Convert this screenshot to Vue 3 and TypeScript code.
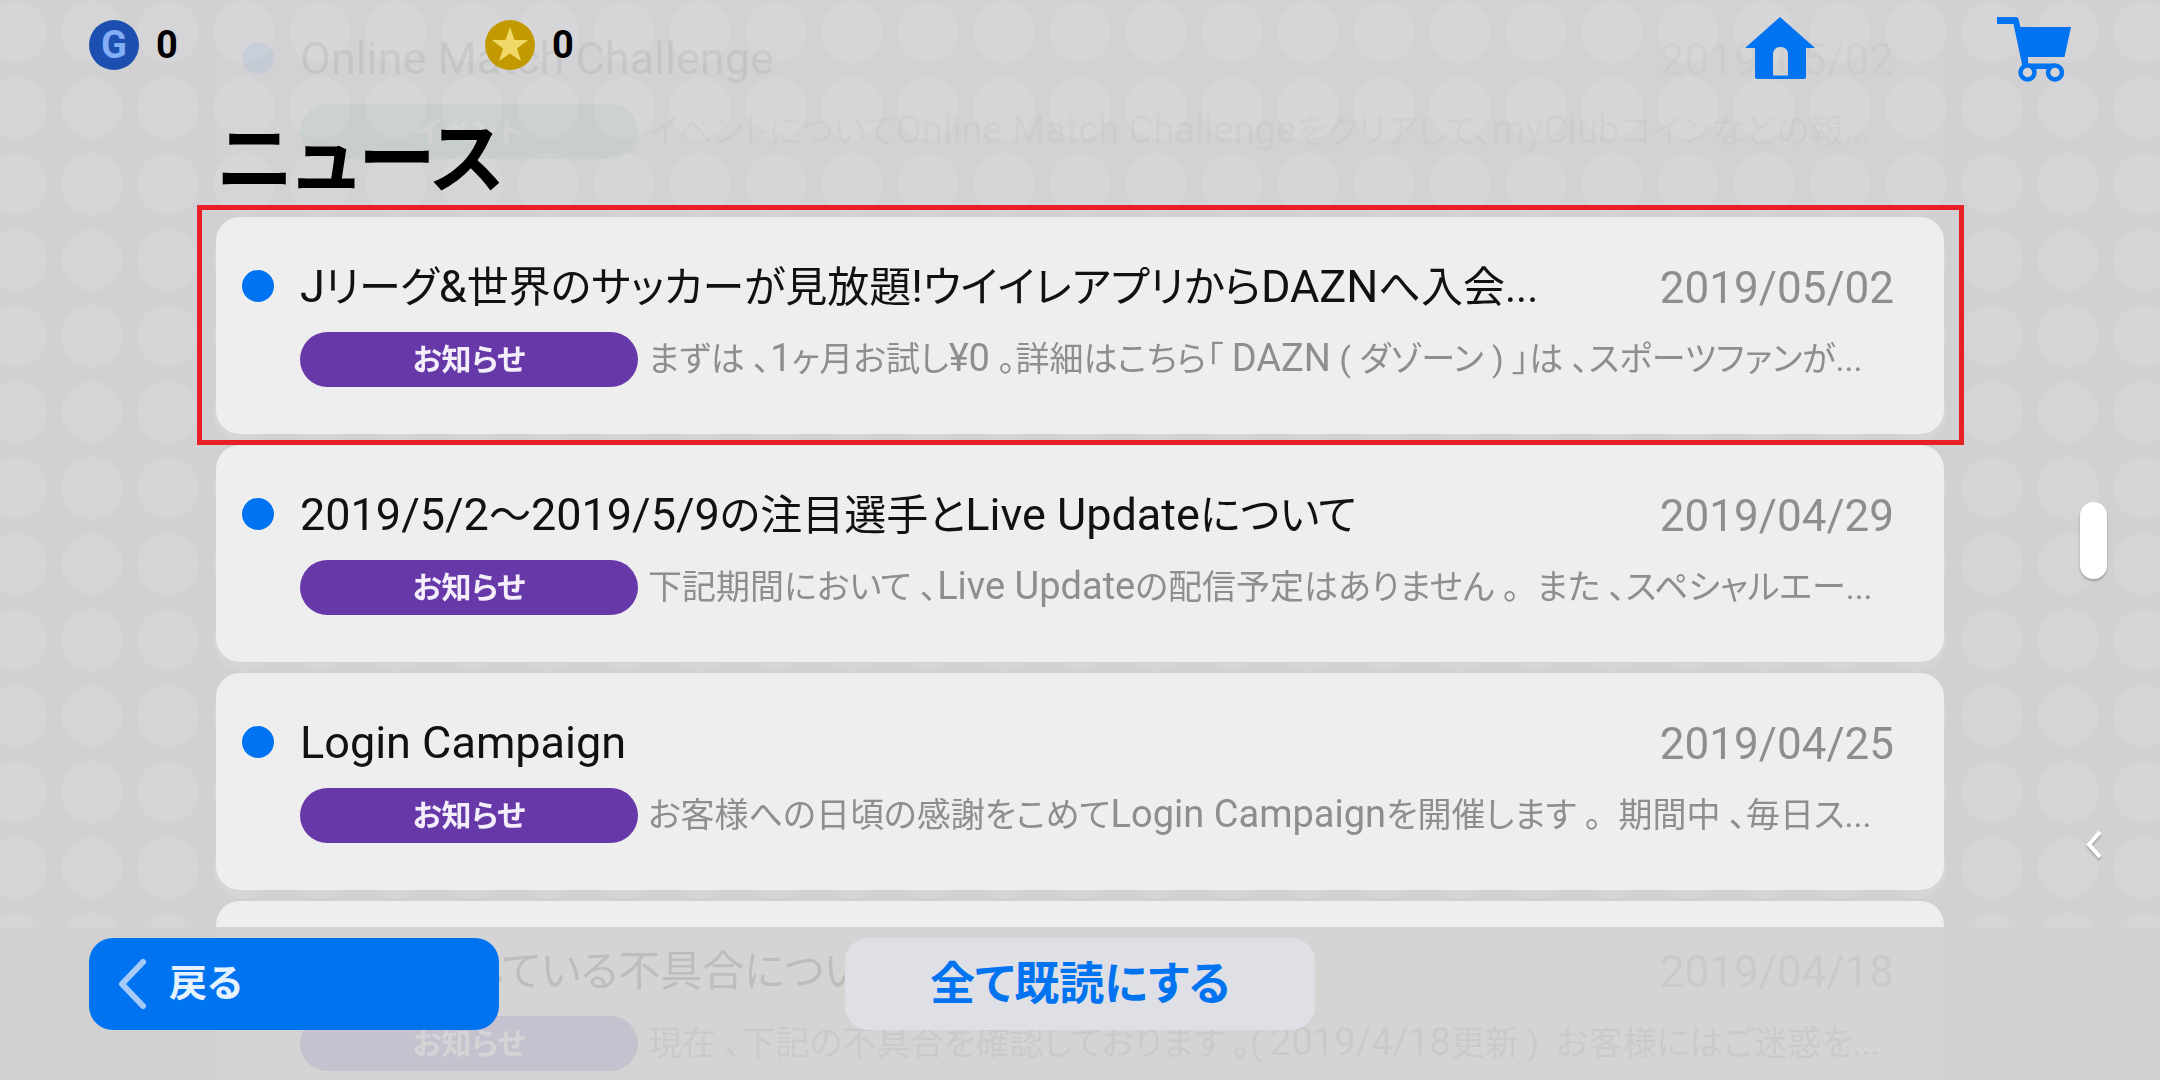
<script setup lang="ts">
interface NewsItem {
  title: string
  date: string
  kind: 'info' | 'event'
  body: string
  framed?: boolean
}

const kindLabels: Record<NewsItem['kind'], string> = {
  info: 'お知らせ',
  event: 'イベント',
}

const news: NewsItem[] = [
  {
    title: 'Online Match Challenge',
    date: '2019/05/02',
    kind: 'event',
    body: 'イベントについてOnline Match Challengeをクリアして、myClubコインなどの報...',
  },
  {
    title: 'Jリーグ&世界のサッカーが見放題!ウイイレアプリからDAZNへ入会...',
    date: '2019/05/02',
    kind: 'info',
    body: 'まずは 、1ヶ月お試し¥0 。詳細はこちら「 DAZN ( ダゾーン ) 」は 、スポーツファンが...',
    framed: true,
  },
  {
    title: '2019/5/2～2019/5/9の注目選手とLive Updateについて',
    date: '2019/04/29',
    kind: 'info',
    body: '下記期間において 、Live Updateの配信予定はありません 。\u00a0 また 、スペシャルエー...',
  },
  {
    title: 'Login Campaign',
    date: '2019/04/25',
    kind: 'info',
    body: 'お客様への日頃の感謝をこめてLogin Campaignを開催します 。\u00a0 期間中 、毎日ス...',
  },
  {
    title: '現在発生している不具合について',
    date: '2019/04/18',
    kind: 'info',
    body: '現在 、下記の不具合を確認しております 。( 2019/4/18更新 )\u00a0 お客様にはご迷惑を...',
  },
]

/* Latin words and numbers are set a little larger than the kana and kanji. */
const splitRuns = (text: string) =>
  text
    .split(/([A-Za-z0-9&/!¥]+(?: [A-Za-z]+)*)/)
    .filter(Boolean)
    .map((run) => ({ text: run, latin: /^[A-Za-z0-9&/!¥]/.test(run) }))
</script>

<template>
  <div class="screen">
    <ul class="news">
      <li v-for="item in news" :key="item.title" :class="{ framed: item.framed }">
        <a class="card" href="#">
          <span class="unread"></span>
          <span class="content">
            <span class="line">
              <span class="title"
                ><span v-for="(run, i) in splitRuns(item.title)" :key="i" :class="{ latin: run.latin }">{{
                  run.text
                }}</span></span
              >
              <time class="date">{{ item.date }}</time>
            </span>
            <span class="line">
              <span class="badge" :class="item.kind">{{ kindLabels[item.kind] }}</span>
              <span class="body"
                ><span v-for="(run, i) in splitRuns(item.body)" :key="i" :class="{ latin: run.latin }">{{
                  run.text
                }}</span></span
              >
            </span>
          </span>
        </a>
      </li>
    </ul>

    <header class="top">
      <div class="bar">
        <div class="coin">
          <span class="gp">G</span>
          <span>0</span>
        </div>
        <div class="coin">
          <svg width="50" height="50" viewBox="0 0 50 50" aria-hidden="true">
            <circle cx="25" cy="25" r="25" fill="#c29a00" />
            <path d="M25 7l4.500 13H43L32 28.500 36 41 25 33.500 14 41l4-12.500L7 20h13.500z" fill="#f0d968" />
          </svg>
          <span>0</span>
        </div>
        <nav class="actions">
          <button type="button" aria-label="ホーム">
            <svg width="70" height="62" viewBox="0 0 70 62">
              <path
                fill="#0073f0"
                fill-rule="evenodd"
                d="M35 0 70 31H61V60Q61 62 59 62H12Q10 62 10 60V31H0ZM28 58.500H43V38Q43 30 35.500 30T28 38Z"
              />
            </svg>
          </button>
          <button type="button" aria-label="ショップ">
            <svg width="74" height="66" viewBox="0 0 74 66">
              <path
                fill="#0073f0"
                d="M0 0H19Q21 0 21.500 2L23.500 10H74L67.500 40H31V46.500H58V52H26L16.500 7H0Z"
              />
              <g fill="#d4d4d6" stroke="#0073f0" stroke-width="4.500">
                <circle cx="30.500" cy="55.500" r="7" />
                <circle cx="58" cy="55.500" r="7" />
              </g>
            </svg>
          </button>
        </nav>
      </div>
      <h1>ニュース</h1>
    </header>

    <aside class="edge" aria-hidden="true">
      <span class="handle"></span>
      <svg width="18" height="30" viewBox="0 0 18 30">
        <path d="M15 2 4 14.500 15 27" fill="none" stroke="#fff" stroke-width="4" />
      </svg>
    </aside>

    <footer class="bottom">
      <button type="button" class="back">
        <svg width="30" height="52" viewBox="0 0 30 52" aria-hidden="true">
          <path
            d="M26 4 5 26 26 48"
            fill="none"
            stroke="#a6cbf8"
            stroke-width="6"
            stroke-linecap="round"
            stroke-linejoin="round"
          />
        </svg>
        <span>戻る</span>
      </button>
      <button type="button" class="read-all">全て既読にする</button>
    </footer>
  </div>
</template>

<style>
html,
body {
  margin: 0;
  overflow: hidden;
}
</style>

<style scoped>
.screen {
  position: relative;
  box-sizing: border-box;
  height: 100vh;
  overflow: hidden;
  font-family: Roboto, 'Noto Sans CJK JP', sans-serif;
  font-feature-settings: 'palt';
  background-color: #d1d1d3;
  background-image: radial-gradient(circle closest-side, #d5d5d7 80%, transparent 82%);
  background-size: 76px 76px;
  background-position: -22px -6px;
}

button {
  padding: 0;
  border: 0;
  background: none;
  font: inherit;
  cursor: pointer;
}

svg {
  display: block;
  flex: none;
}

.news {
  display: flex;
  flex-direction: column;
  gap: 11px;
  margin: 0;
  padding: 0 10%;
  list-style: none;
  /* starts scrolled by one gap; rows fade out under the header */
  margin-top: -11px;
  mask-image: linear-gradient(rgba(0, 0, 0, 0.06) 216px, #000 216px);
}

.news li {
  position: relative;
}

.framed::after {
  content: '';
  position: absolute;
  z-index: 1;
  inset: -12px -20px -11px -19px;
  border: 5px solid #e81f27;
  pointer-events: none;
}

.card {
  display: flex;
  box-sizing: border-box;
  height: 217px;
  padding: 41px 50px 0 26px;
  border-radius: 24px;
  background: #eee;
  color: #111;
  text-decoration: none;
}

.unread {
  flex: none;
  width: 32px;
  height: 32px;
  margin: 12px 26px 0 0;
  border-radius: 50%;
  background: #0073f0;
}

.content {
  display: flex;
  flex: 1;
  flex-direction: column;
  gap: 14px;
  min-width: 0;
}

.line {
  display: flex;
  align-items: center;
  white-space: nowrap;
}

.latin {
  line-height: 1;
}

.title {
  flex: 1;
  font-size: 42px;
  line-height: 60px;
}

.title .latin {
  font-size: 45px;
}

.date {
  color: #8e8e90;
  font-size: 44px;
  line-height: 60px;
}

.badge {
  flex: none;
  width: 338px;
  margin-right: 10px;
  border-radius: 28px;
  color: #f4eefb;
  font-size: 30px;
  font-weight: 700;
  line-height: 55px;
  text-align: center;
}

.info {
  background: #6739a8;
}

.event {
  background: #3f9f90;
}

.body {
  color: #8e8e90;
  font-size: 34px;
  line-height: 55px;
}

.body .latin {
  font-size: 38px;
}

.top {
  position: absolute;
  inset: 0 0 auto;
}

.bar {
  display: flex;
  padding: 17px 89px 0;
}

.coin {
  display: flex;
  gap: 17px;
  width: 396px;
  padding-top: 3px;
  font-size: 38px;
  font-weight: 700;
  line-height: 50px;
}

.gp {
  width: 50px;
  height: 50px;
  border-radius: 50%;
  background: #1c4fb0;
  color: #82aef5;
  text-align: center;
}

.actions {
  display: flex;
  align-items: flex-start;
  gap: 182px;
  margin-left: auto;
}

h1 {
  margin: 40px 10% 0;
  color: #000;
  font-size: 78px;
  font-weight: 700;
  line-height: 76px;
}

.edge {
  position: absolute;
  top: 502px;
  right: 53px;
  display: flex;
  flex-direction: column;
  align-items: center;
  gap: 251px;
  filter: drop-shadow(0 2px 1px rgba(0, 0, 0, 0.25));
}

.handle {
  width: 27px;
  height: 77px;
  border-radius: 14px;
  background: #fff;
}

.bottom {
  position: absolute;
  inset: auto 0 0;
  display: grid;
  grid-template-columns: 1fr 470px 1fr;
  padding: 11px 89px 50px;
  background: rgba(208, 208, 210, 0.9);
}

.bottom button {
  height: 92px;
  padding-bottom: 8px;
  border-radius: 24px;
  font-weight: 700;
}

.bottom .back {
  display: flex;
  align-items: center;
  gap: 22px;
  width: 410px;
  padding-bottom: 10px;
  padding-left: 28px;
  background: #0073f0;
  color: #e6f1fe;
  font-size: 38px;
}

.back svg {
  margin-top: 10px;
}

.read-all {
  background: #dfdfe6;
  color: #0073f0;
  font-size: 45px;
}
</style>
